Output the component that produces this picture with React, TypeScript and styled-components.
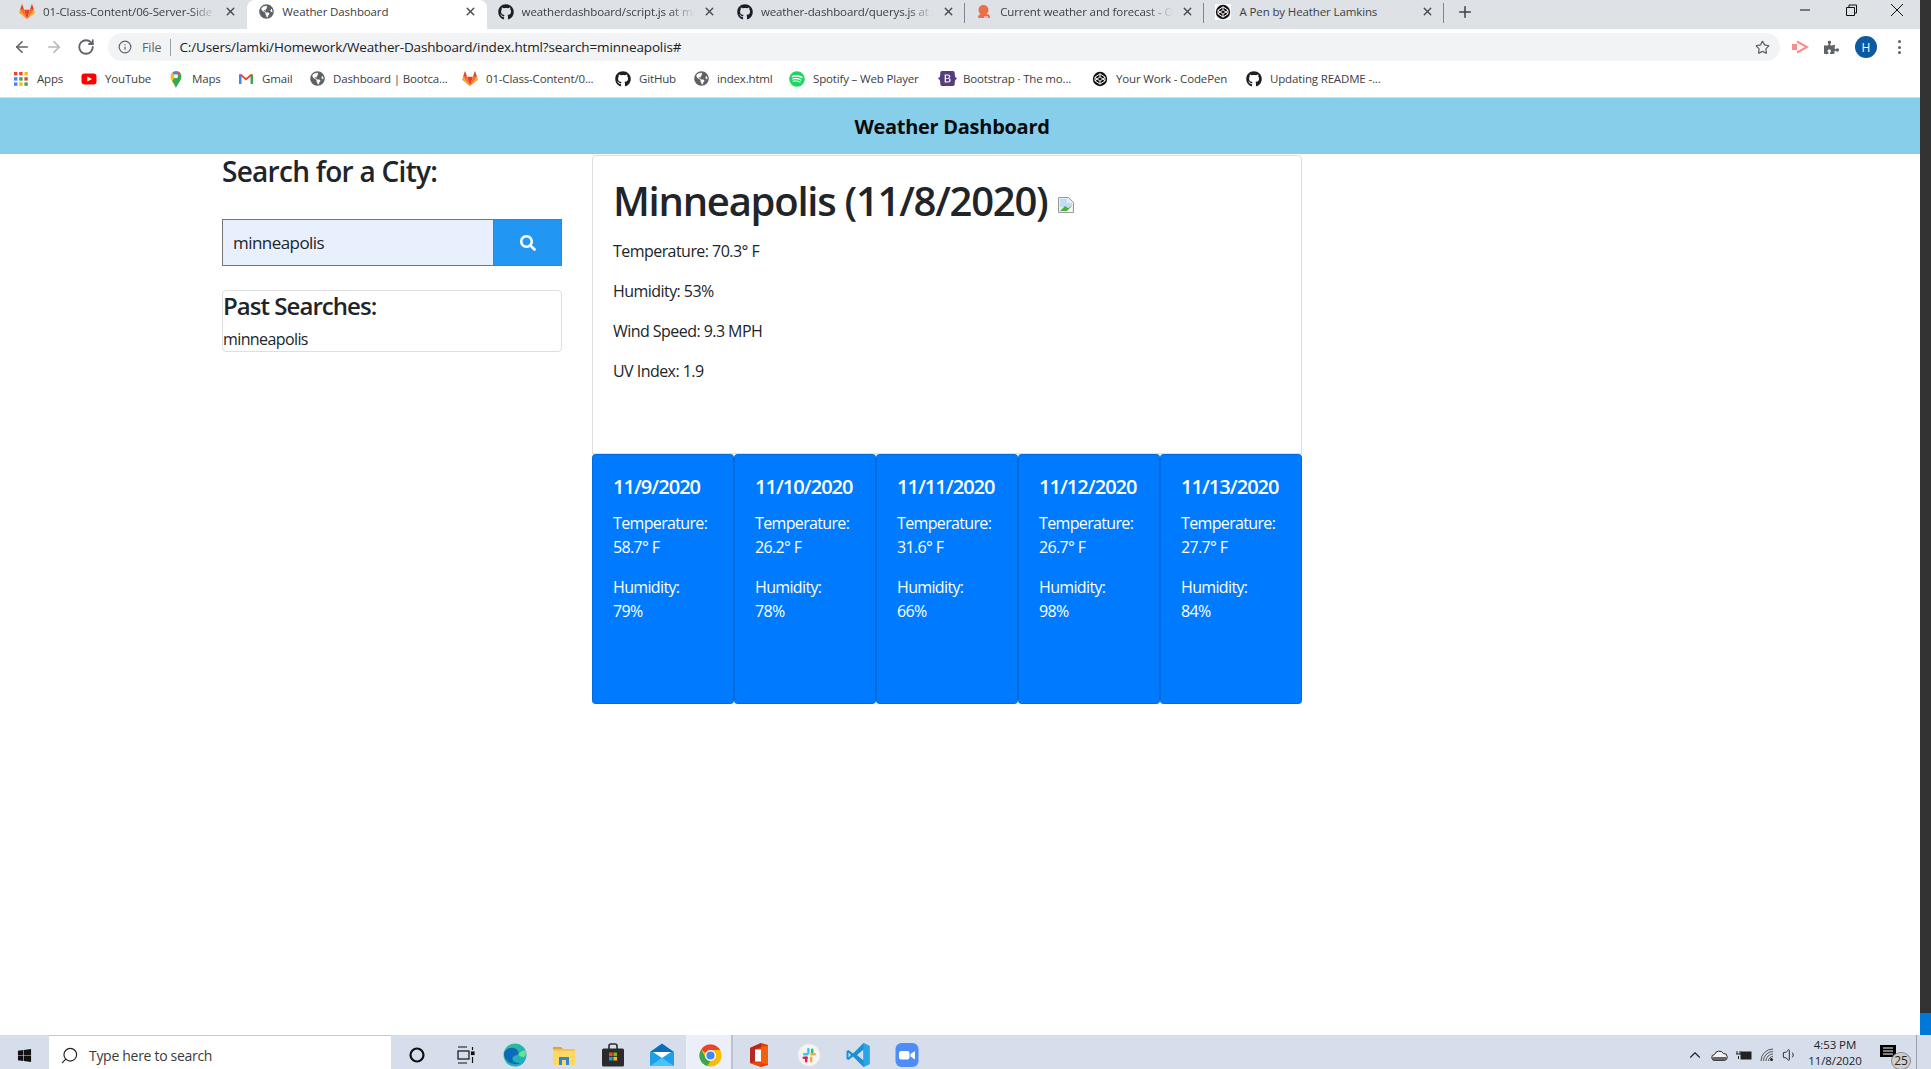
import React from "react";
import styled, { createGlobalStyle } from "styled-components";
import { FaGithub, FaGlobeAmericas, FaSpotify, FaSearch, FaWindows, FaPuzzlePiece, FaBootstrap } from "react-icons/fa";
import { ArrowLeft, ArrowRight, RotateCw, Info, Star, Plus, X, Search, ChevronUp, Volume1 } from "lucide-react";

const Global = createGlobalStyle`
  html, body { margin: 0; padding: 0; background: #fff; overflow: hidden; }
  * { box-sizing: border-box; }
  body { font-family: "Open Sans", "Noto Sans", sans-serif; color: #212529; }
`;

const Screen = styled.div`
  width: 1931px; height: 1069px; display: flex; flex-direction: column; overflow: hidden;
`;
const Upper = styled.div`
  flex: 1; display: flex; min-height: 0;
`;
const Browser = styled.div`
  width: 1920px; display: flex; flex-direction: column; background: #fff;
`;
const SideStrip = styled.div`
  width: 11px; display: flex; flex-direction: column; background: #333;
`;
const SideDark = styled.div`flex: 1;`;
const SideBlue = styled.div`height: 22px; background: #0078d7;`;

const TabStrip = styled.div`
  height: 29px; background: #dee1e6; display: flex; align-items: stretch; padding-left: 8px; flex: none;
`;
const Tab = styled.div<{ $active?: boolean; $sep?: boolean }>`
  width: 239.3px; flex: none; display: flex; align-items: center; padding: 0 8px 6px 11px; gap: 8px;
  background: ${(p) => (p.$active ? "#fff" : "transparent")};
  border-radius: ${(p) => (p.$active ? "8px 8px 0 0" : "0")};
  position: relative;
  &::after {
    content: ""; display: ${(p) => (p.$sep ? "block" : "none")};
    position: absolute; right: 0; top: 3px; bottom: 6px; width: 1px; background: #80868b;
  }
`;
const TabLabel = styled.span<{ $fade?: boolean }>`
  flex: 1; min-width: 0; white-space: nowrap; font-size: 11.5px; letter-spacing: -0.12px; color: #3c4043;
  -webkit-mask-image: ${(p) => (p.$fade ? "linear-gradient(to right, #000 85%, transparent 100%)" : "none")};
`;
const TabClose = styled(X)`
  width: 13px; height: 13px; color: #45494d; flex: none; margin-right: 2px;
`;
const NewTab = styled(Plus)`
  width: 18px; height: 18px; color: #3c4043; align-self: center; margin: 0 0 5px 12px; flex: none;
`;
const WindowControls = styled.div`
  margin-left: auto; display: flex; align-items: center; padding: 0 15px 10px 0; gap: 30px;
`;
const WinGlyph = styled.svg`
  width: 16px; height: 16px; display: block; fill: none; stroke: #111; stroke-width: 1;
`;

const Toolbar = styled.div`
  height: 32px; flex: none; display: flex; align-items: flex-end; background: #fff; padding-left: 13px;
`;
const NavButton = styled.div<{ $dim?: boolean }>`
  width: 18px; height: 28px; margin-right: 14px; display: flex; align-items: center; justify-content: center;
  color: ${(p) => (p.$dim ? "#b4b7bb" : "#5f6368")};
  svg { width: 18px; height: 18px; }
`;
const AddressPill = styled.div`
  width: 1672px; margin-left: -1px; height: 28px; border-radius: 14px; background: #f1f3f4; display: flex; align-items: center; padding: 0 11px 0 10px;
  font-size: 13.5px; color: #202124;
`;
const InfoIcon = styled(Info)`width: 14px; height: 14px; color: #5f6368; flex: none;`;
const FileLabel = styled.span`margin-left: 10px; color: #5f6368; font-size: 12.5px; letter-spacing: -0.1px;`;
const AddressDivider = styled.span`width: 1px; height: 17px; background: #9aa0a6; margin: 0 8px 0 9px;`;
const Url = styled.span`flex: 1; letter-spacing: -0.14px; white-space: nowrap;`;
const StarIcon = styled(Star)`width: 15px; height: 15px; color: #5f6368; flex: none; margin-right: -1px;`;
const Extensions = styled.div`
  width: 140px; display: flex; align-items: center; height: 28px; padding-left: 12px;
`;
const Avatar = styled.div`
  width: 22px; height: 22px; border-radius: 50%; background: #0b5aa2; color: #fff; display: flex; align-items: center; justify-content: center;
  font-size: 12px; margin-left: 16px;
`;
const Dots = styled.div`
  margin-left: 21px; display: flex; flex-direction: column; gap: 2.4px;
  span { width: 3px; height: 3px; background: #5f6368; border-radius: 50%; display: block; }
`;
const PuzzleIcon = styled(FaPuzzlePiece)`width: 15px; height: 15px; color: #5f6368; margin-left: 15px;`;

const BookmarkBar = styled.div`
  height: 37px; flex: none; display: flex; align-items: center; padding: 0 0 1px 13px; border-bottom: 1px solid #dcdcdc; background: #fff;
`;
const Bookmark = styled.div<{ $w: number }>`
  display: flex; align-items: center; gap: 8px; margin-right: 17px;
  span { width: ${(p) => p.$w}px; white-space: nowrap; font-size: 11.5px; letter-spacing: -0.16px; color: #3c4043; }
`;
const FavBox = styled.div`
  width: 16px; height: 16px; flex: none; display: flex; align-items: center; justify-content: center;
  svg { display: block; flex: none; }
`;

const Banner = styled.header`
  height: 56px; flex: none; background: #87ceeb; display: flex; align-items: center; justify-content: center; padding-right: 16px;
  font-size: 20px; font-weight: 700; color: #0b0b0b; letter-spacing: -0.28px;
`;

const Content = styled.main`
  flex: 1; display: flex; gap: 30px; padding: 0 0 0 222px; align-items: flex-start; min-height: 0;
`;
const LeftColumn = styled.section`width: 340px; flex: none;`;
const SearchTitle = styled.h3`
  margin: 0 0 31px; font-size: 28px; line-height: 34px; font-weight: 600; letter-spacing: -0.72px; color: #212529;
`;
const SearchForm = styled.div`display: flex; height: 47px;`;
const SearchField = styled.div`
  width: 272px; background: #e8f0fe; border: 1px solid #767676; padding-left: 10px; display: flex; align-items: center;
  font-size: 17px; letter-spacing: -0.55px; color: #212529;
`;
const SearchButton = styled.div`
  flex: 1; background: #2196f3; border: 1px solid #767676; border-left: none; display: flex; align-items: center; justify-content: center; color: #fff;
  svg { width: 16px; height: 16px; }
`;
const PastBox = styled.div`
  margin-top: 24px; height: 62px; border: 1px solid rgba(0,0,0,.125); border-radius: 4px;
`;
const PastTitle = styled.h4`
  margin: 0 0 7px; font-size: 24px; line-height: 29px; font-weight: 600; letter-spacing: -0.95px;
`;
const PastItem = styled.div`font-size: 16px; line-height: 24px; letter-spacing: -0.6px;`;

const RightColumn = styled.section`width: 710px; flex: none; padding-top: 1px;`;
const WeatherCard = styled.div`
  height: 299px; border: 1px solid rgba(0,0,0,.125); border-top-left-radius: 4px; border-top-right-radius: 4px; padding: 21px 20px 0;
`;
const CityTitle = styled.h1`
  margin: 0 0 14px; font-size: 40px; line-height: 48px; font-weight: 600; letter-spacing: -1.25px; white-space: nowrap;
`;
const BrokenImage = styled.svg`
  width: 16px; height: 16px; margin-left: 11px; vertical-align: 3px;
`;
const Reading = styled.p`
  margin: 0 0 16px; font-size: 16px; line-height: 24px; letter-spacing: -0.55px;
`;
const ForecastRow = styled.div`display: flex;`;
const ForecastCard = styled.article`
  width: 142px; height: 250px; flex: none; background: #007bff; color: #fff; border: 1px solid rgba(0,0,0,.125); border-radius: 4px; padding: 20px;
`;
const ForecastDate = styled.h5`
  margin: 0 0 12px; font-size: 20px; line-height: 24px; font-weight: 600; letter-spacing: -0.95px; white-space: nowrap;
`;
const ForecastText = styled.p`
  margin: 0 0 16px; font-size: 16px; line-height: 24px; letter-spacing: -0.65px;
`;

const Taskbar = styled.footer`
  height: 34px; flex: none; background: #d6deec; overflow: hidden; display: flex; align-items: flex-start;
`;
const TaskSlot = styled.div<{ $w?: number; $active?: boolean }>`
  width: ${(p) => p.$w ?? 49}px; height: 40px; flex: none; display: flex; align-items: center; justify-content: center;
  background: ${(p) => (p.$active ? "#eceff7" : "transparent")};
  padding-left: ${(p) => (p.$active ? "4px" : "0")};
`;
const TaskSearch = styled.div`
  width: 342px; height: 40px; margin-right: 1px; background: #fff; border-top: 1px solid #c8c8c8; display: flex; align-items: center; padding-left: 11px; gap: 10px; flex: none;
  font-size: 14px; color: #3a3a3a; letter-spacing: -0.3px;
`;
const TaskSearchIcon = styled(Search)`width: 19px; height: 19px; transform: scaleX(-1); color: #222;`;
const TaskDivider = styled.div`width: 2px; height: 34px; background: #bcc3cf; flex: none;`;
const Tray = styled.div`
  margin-left: auto; display: flex; align-items: flex-start; height: 40px; padding-right: 0;
`;
const TrayIcon = styled.div<{ $w: number }>`
  width: ${(p) => p.$w}px; height: 40px; display: flex; align-items: center; justify-content: center; color: #222; flex: none;
`;
const Clock = styled.div`
  width: 64px; height: 34px; padding-top: 2px; text-align: center; font-size: 11.5px; line-height: 16px; color: #222; letter-spacing: -0.1px; flex: none; margin-left: 2px;
`;
const NoticeWrap = styled.div`
  width: 40px; height: 40px; position: relative; flex: none; margin-left: 10px; border-right: 1px solid #9aa2b0; margin-right: 14px;
`;
const NoticeBadge = styled.div`
  position: absolute; left: 14px; top: 17px; width: 20px; height: 18px; border-radius: 50%; background: #cfcfcf; border: 1px solid #888;
  font-size: 12px; line-height: 16px; text-align: center; color: #222;
`;

const GitLab = () => (
  <svg width="16" height="16" viewBox="0 0 24 24">
    <path d="M12 23 16.4 8.5H7.6Z" fill="#e24329" />
    <path d="M12 23 7.6 8.5H1.5Z" fill="#fc6d26" />
    <path d="M12 23 16.4 8.5H22.5Z" fill="#fc6d26" />
    <path d="M1.5 8.5.2 12.6c-.1.4 0 .8.3 1L12 23Z" fill="#fca326" />
    <path d="M22.5 8.5 23.8 12.6c.1.4 0 .8-.3 1L12 23Z" fill="#fca326" />
    <path d="M1.5 8.5H7.6L5 .6c-.1-.4-.7-.4-.8 0Z" fill="#e24329" />
    <path d="M22.5 8.5H16.4L19 .6c.1-.4.7-.4.8 0Z" fill="#e24329" />
  </svg>
);
const Globe = () => <FaGlobeAmericas size={15} color="#5f6368" />;
const GitHub = () => <FaGithub size={16} color="#1b1f23" />;
const OpenWeather = () => (
  <svg width="16" height="16" viewBox="0 0 16 16">
    <circle cx="7.5" cy="6" r="5" fill="#eb6e4b" />
    <path d="M2 14c0-3 2-4 3-4h6c2 0 3 1.500 3 4Z" fill="#eb6e4b" />
    <path d="M8 12h4v2H8Z" fill="#f6b9a6" />
  </svg>
);
const CodePen = () => (
  <svg width="16" height="16" viewBox="0 0 16 16">
    <rect width="16" height="16" fill="#fff" />
    <circle cx="8" cy="8" r="7.2" fill="#111" />
    <path d="M8 2.800 13 6.200V9.800L8 13.200 3 9.800V6.200ZM8 2.800V5.800M8 10.200V13.200M3 6.200 8 10.200 13 6.200M3 9.800 8 5.800 13 9.800" fill="none" stroke="#fff" strokeWidth="1" />
  </svg>
);
const AppsGrid = () => (
  <svg width="14" height="14" viewBox="0 0 14 14">
    {["#ea4335", "#ea4335", "#fbbc04", "#4285f4", "#34a853", "#ea4335", "#4285f4", "#fbbc04", "#34a853"].map((c, i) => (
      <rect key={i} x={(i % 3) * 5.2} y={Math.floor(i / 3) * 5.2} width="3.4" height="3.4" fill={c} />
    ))}
  </svg>
);
const YouTube = () => (
  <svg width="16" height="16" viewBox="0 0 16 16">
    <rect x="0.5" y="2.5" width="15" height="11" rx="3" fill="#f00" />
    <path d="M6.3 5.500 11 8 6.300 10.500Z" fill="#fff" />
  </svg>
);
const MapsPin = () => (
  <svg width="16" height="18" viewBox="0 0 16 20">
    <path d="M8 20C6.500 16 2 12 2 7a6 6 0 0 1 1.800-4.200L8 7Z" fill="#fbbc04" />
    <path d="M8 20c1.500-4 6-8 6-13a6 6 0 0 0-.7-2.800L8 7l-4.200 5.200C5.200 14.500 7 17 8 20Z" fill="#34a853" />
    <path d="M3.800 2.800A6 6 0 0 1 8 1a6 6 0 0 1 3 .8L8 7Z" fill="#4285f4" />
    <path d="M11 1.800a6 6 0 0 1 2.300 2.400L8 7Z" fill="#ea4335" />
    <circle cx="8" cy="7" r="2.200" fill="#fff" />
  </svg>
);
const Gmail = () => (
  <svg width="16" height="16" viewBox="0 0 16 16">
    <path d="M1 3.500h2.500V13H1Z" fill="#4285f4" />
    <path d="M12.500 3.500H15V13h-2.500Z" fill="#34a853" />
    <path d="M1 3.500 3.500 3.300 8 7l4.500-3.700L15 3.500 8 9.500Z" fill="#ea4335" />
  </svg>
);
const Chrome = ({ s = 23 }: { s?: number }) => (
  <svg width={s} height={s} viewBox="0 0 24 24">
    <circle cx="12" cy="12" r="11.500" fill="#fbbc04" />
    <path d="M12 .5A11.500 11.500 0 0 1 22 6.300H12A5.700 5.700 0 0 0 6.900 9.400L2.300 5.700A11.500 11.500 0 0 1 12 .5Z" fill="#ea4335" />
    <path d="M2.300 5.700 6.900 14.300A5.700 5.700 0 0 0 12 17.700L8.700 23A11.500 11.500 0 0 1 2.300 5.700Z" fill="#34a853" />
    <circle cx="12" cy="12" r="5.700" fill="#fff" />
    <circle cx="12" cy="12" r="4.300" fill="#4285f4" />
  </svg>
);
const Edge = () => (
  <svg width="24" height="24" viewBox="0 0 24 24">
    <defs>
      <linearGradient id="edgeA" x1="0" y1="0" x2="1" y2="1"><stop offset="0" stopColor="#33c481" /><stop offset="1" stopColor="#1ba5d8" /></linearGradient>
    </defs>
    <circle cx="12" cy="12" r="11.500" fill="url(#edgeA)" />
    <path d="M1 12C1 6 7 4 11 5c3 .8 5 3 4.500 6.500-3 1-6 1.500-6 4 0 3 4 5 8 4.500A11.500 11.500 0 0 1 1 12Z" fill="#0c6bb8" />
    <path d="M15.500 11.500c.5 1.500 3 3 5.500 2.500 2-1.500 2.500-5 1.500-6.500-1-.5-6 .5-7 4Z" fill="#6be28f" />
  </svg>
);
const Folder = () => (
  <svg width="24" height="22" viewBox="0 0 24 22">
    <path d="M1 3h8l2 2h-10Z" fill="#e4a22d" />
    <path d="M1 5h22v16H1Z" fill="#ffd767" />
    <path d="M1 5h22v2H1Z" fill="#f5c34c" />
    <path d="M7 21v-8h10v8h-3v-5h-4v5Z" fill="#2d86d4" />
  </svg>
);
const StoreBag = () => (
  <svg width="24" height="24" viewBox="0 0 24 24">
    <path d="M8 6V3a2 2 0 0 1 2-2h4a2 2 0 0 1 2 2v3" fill="none" stroke="#2b2b2b" strokeWidth="1.600" />
    <rect x="1" y="5.500" width="22" height="18" rx="1.500" fill="#2b2b2b" />
    <rect x="8" y="9.500" width="3.600" height="3.600" fill="#f25022" />
    <rect x="12.400" y="9.500" width="3.600" height="3.600" fill="#7fba00" />
    <rect x="8" y="13.900" width="3.600" height="3.600" fill="#00a4ef" />
    <rect x="12.400" y="13.900" width="3.600" height="3.600" fill="#ffb900" />
  </svg>
);
const MailIcon = () => (
  <svg width="24" height="24" viewBox="0 0 24 24">
    <rect x="0" y="9" width="24" height="14" fill="#1f9fe8" />
    <path d="M0 9 12 .5 24 9Z" fill="#0a6cbc" />
    <path d="M3 9h18l-9 6Z" fill="#fff" />
    <path d="M0 23 12 15l12 8Z" fill="#45c5f8" />
  </svg>
);
const Office = () => (
  <svg width="20" height="24" viewBox="0 0 20 24">
    <path d="M12 0 19 2V22L12 24 1 20V5Z" fill="#eb3c00" />
    <path d="M12 0 1 5v15l5-2V6.500L12 4Z" fill="#b7281e" />
    <path d="M12 24 1 20h11Z" fill="#e64a19" />
    <rect x="6" y="6.500" width="6" height="12" fill="#fff" />
    <path d="M12 4v16l7 1V3Z" fill="#f0620f" />
  </svg>
);
const Slack = () => (
  <svg width="24" height="24" viewBox="0 0 24 24">
    <circle cx="12" cy="12" r="11.500" fill="#f4f4f4" stroke="#ddd" />
    <rect x="10.200" y="5" width="2.400" height="6" rx="1.200" fill="#36c5f0" />
    <rect x="6" y="10" width="5.500" height="2.400" rx="1.200" fill="#36c5f0" />
    <rect x="14" y="5.500" width="2.400" height="6" rx="1.200" fill="#2eb67d" />
    <rect x="13" y="10" width="6" height="2.400" rx="1.200" fill="#ecb22e" />
    <rect x="13" y="13.500" width="2.400" height="6" rx="1.200" fill="#ecb22e" />
    <rect x="8" y="13.500" width="2.400" height="6" rx="1.200" fill="#e01e5a" />
    <rect x="5.500" y="13.500" width="5.500" height="2.400" rx="1.200" fill="#e01e5a" />
  </svg>
);
const VSCode = () => (
  <svg width="24" height="24" viewBox="0 0 24 24">
    <path d="M17.500 0 23.500 3V21L17.500 24 7 13.500 2.500 17 .5 16V8L2.500 7 7 10.500Z" fill="#1b8fd6" />
    <path d="M17.500 6.500 11 12l6.500 5.500ZM2.500 9.500V14.500L5 12Z" fill="#d6deec" />
    <path d="M17.500 0 23.500 3V21L17.500 24Z" fill="#2ba5e8" />
  </svg>
);
const ZoomIcon = () => (
  <svg width="24" height="24" viewBox="0 0 24 24">
    <rect width="23" height="24" x="0.500" rx="6" fill="#4d8df7" />
    <rect x="4" y="8" width="10.500" height="8.500" rx="2" fill="#fff" />
    <path d="M15.500 11 20 8v8.500l-4.500-3Z" fill="#fff" />
  </svg>
);
const TaskView = () => (
  <svg width="18" height="18" viewBox="0 0 18 18" fill="none" stroke="#111" strokeWidth="1.200">
    <path d="M1 1h9M1 17h9" />
    <rect x="1" y="5" width="11" height="8" />
    <path d="M15.500 1v3" />
    <rect x="14.500" y="6" width="2.500" height="2.500" fill="#111" />
    <path d="M15.500 11v6" />
  </svg>
);
const Cortana = () => (
  <svg width="16" height="16" viewBox="0 0 16 16"><circle cx="8" cy="8" r="6.500" fill="none" stroke="#111" strokeWidth="2.200" /></svg>
);
const Cloud = () => (
  <svg width="17" height="11" viewBox="0 0 17 11">
    <path d="M4 10.500a3 3 0 0 1-.5-6A5 5 0 0 1 12.500 3.500a3.500 3.500 0 0 1 .5 7Z" fill="#f2f2f2" stroke="#222" />
    <path d="M1.500 7h14v1a2.500 2.500 0 0 1-2.500 2.500H4A2.500 2.500 0 0 1 1.500 7Z" fill="#666" />
  </svg>
);
const BatteryPlug = () => (
  <svg width="17" height="12" viewBox="0 0 17 12" fill="none" stroke="#222">
    <path d="M1 5h5M2 2v3M5 2v3M3.500 7V10" />
    <rect x="6" y="3" width="10" height="7" fill="#222" />
  </svg>
);
const Wifi = () => (
  <svg width="14" height="14" viewBox="0 0 14 14" fill="none" stroke="#555" strokeWidth="1">
    <path d="M1 13A12 12 0 0 1 13 1M3.500 13A9.500 9.500 0 0 1 13 3.500M6 13a7 7 0 0 1 7-7M8.500 13A4.500 4.500 0 0 1 13 8.500" />
    <circle cx="11.500" cy="11.500" r="1.500" fill="#222" stroke="none" />
  </svg>
);
const Notice = () => (
  <svg width="16" height="14" viewBox="0 0 16 14" style={{ position: "absolute", left: 3, top: 10 }}>
    <rect width="16" height="12" fill="#000" />
    <path d="M3 3h10M3 6h10M3 9h10" stroke="#fff" />
  </svg>
);
const PlayMark = () => (
  <svg width="17" height="14" viewBox="0 0 17 14">
    <rect x="0" y="4" width="5" height="6" fill="#ff8a8e" />
    <path d="M5 1.500 15 7 5 12.500" fill="none" stroke="#ff8a8e" strokeWidth="2" />
  </svg>
);

const tabs = [
  { icon: <GitLab />, label: "01-Class-Content/06-Server-Side", fade: true },
  { icon: <Globe />, label: "Weather Dashboard", active: true },
  { icon: <GitHub />, label: "weatherdashboard/script.js at ma", fade: true },
  { icon: <GitHub />, label: "weather-dashboard/querys.js at r", sep: true, fade: true },
  { icon: <OpenWeather />, label: "Current weather and forecast - O", sep: true, fade: true },
  { icon: <CodePen />, label: "A Pen by Heather Lamkins", sep: true },
];
const bookmarks = [
  { icon: <AppsGrid />, label: "Apps", w: 27 },
  { icon: <YouTube />, label: "YouTube", w: 46 },
  { icon: <MapsPin />, label: "Maps", w: 29 },
  { icon: <Gmail />, label: "Gmail", w: 30 },
  { icon: <Globe />, label: "Dashboard | Bootca...", w: 112 },
  { icon: <GitLab />, label: "01-Class-Content/0...", w: 112 },
  { icon: <GitHub />, label: "GitHub", w: 37 },
  { icon: <Globe />, label: "index.html", w: 55 },
  { icon: <FaSpotify size={16} color="#1ed760" />, label: "Spotify – Web Player", w: 109 },
  { icon: <FaBootstrap size={19} color="#563d7c" />, label: "Bootstrap · The mo...", w: 112 },
  { icon: <CodePen />, label: "Your Work - CodePen", w: 113 },
  { icon: <GitHub />, label: "Updating README -...", w: 114 },
];
const readings = ["Temperature: 70.3° F", "Humidity: 53%", "Wind Speed: 9.3 MPH", "UV Index: 1.9"];
const forecast = [
  { date: "11/9/2020", temp: "58.7° F", hum: "79%" },
  { date: "11/10/2020", temp: "26.2° F", hum: "78%" },
  { date: "11/11/2020", temp: "31.6° F", hum: "66%" },
  { date: "11/12/2020", temp: "26.7° F", hum: "98%" },
  { date: "11/13/2020", temp: "27.7° F", hum: "84%" },
];

export default function App() {
  return (
    <Screen>
      <Global />
      <Upper>
        <Browser>
          <TabStrip>
            {tabs.map((t) => (
              <Tab key={t.label} $active={t.active} $sep={t.sep}>
                <FavBox>{t.icon}</FavBox>
                <TabLabel $fade={t.fade}>{t.label}</TabLabel>
                <TabClose strokeWidth={2.6} />
              </Tab>
            ))}
            <NewTab strokeWidth={2} />
            <WindowControls>
              <WinGlyph viewBox="0 0 16 16"><path d="M3 8h10" /></WinGlyph>
              <WinGlyph viewBox="0 0 16 16"><path d="M3.500 5.500h8v8h-8ZM6 5.500V3h7.500v8H11.500" /></WinGlyph>
              <WinGlyph viewBox="0 0 16 16"><path d="M2 2l12 12M14 2 2 14" /></WinGlyph>
            </WindowControls>
          </TabStrip>
          <Toolbar>
            <NavButton><ArrowLeft strokeWidth={2.2} /></NavButton>
            <NavButton $dim><ArrowRight strokeWidth={2.2} /></NavButton>
            <NavButton><RotateCw strokeWidth={2.4} /></NavButton>
            <AddressPill>
              <InfoIcon strokeWidth={2} />
              <FileLabel>File</FileLabel>
              <AddressDivider />
              <Url>C:/Users/lamki/Homework/Weather-Dashboard/index.html?search=minneapolis#</Url>
              <StarIcon strokeWidth={2} />
            </AddressPill>
            <Extensions>
              <PlayMark />
              <PuzzleIcon />
              <Avatar>H</Avatar>
              <Dots><span /><span /><span /></Dots>
            </Extensions>
          </Toolbar>
          <BookmarkBar>
            {bookmarks.map((b) => (
              <Bookmark key={b.label} $w={b.w}>
                <FavBox>{b.icon}</FavBox>
                <span>{b.label}</span>
              </Bookmark>
            ))}
          </BookmarkBar>
          <Banner>Weather Dashboard</Banner>
          <Content>
            <LeftColumn>
              <SearchTitle>Search for a City:</SearchTitle>
              <SearchForm>
                <SearchField>minneapolis</SearchField>
                <SearchButton><FaSearch /></SearchButton>
              </SearchForm>
              <PastBox>
                <PastTitle>Past Searches:</PastTitle>
                <PastItem>minneapolis</PastItem>
              </PastBox>
            </LeftColumn>
            <RightColumn>
              <WeatherCard>
                <CityTitle>
                  Minneapolis (11/8/2020)
                  <BrokenImage viewBox="0 0 16 16">
                    <path d="M.5.5h10l5 5v10H.5Z" fill="#e8eef5" stroke="#9a9a9a" />
                    <path d="M2 2h7v4h5v4H2Z" fill="#c4dcf2" />
                    <path d="M2 14l5-5 3 2 4-2v5Z" fill="#4caf3a" />
                    <path d="M8 15l6-6v6Z" fill="#fff" />
                  </BrokenImage>
                </CityTitle>
                {readings.map((r) => <Reading key={r}>{r}</Reading>)}
              </WeatherCard>
              <ForecastRow>
                {forecast.map((f) => (
                  <ForecastCard key={f.date}>
                    <ForecastDate>{f.date}</ForecastDate>
                    <ForecastText>Temperature:<br />{f.temp}</ForecastText>
                    <ForecastText>Humidity:<br />{f.hum}</ForecastText>
                  </ForecastCard>
                ))}
              </ForecastRow>
            </RightColumn>
          </Content>
        </Browser>
        <SideStrip>
          <SideDark />
          <SideBlue />
        </SideStrip>
      </Upper>
      <Taskbar>
        <TaskSlot><FaWindows size={15} color="#111" /></TaskSlot>
        <TaskSearch>
          <TaskSearchIcon strokeWidth={1.5} />
          Type here to search
        </TaskSearch>
        <TaskSlot><Cortana /></TaskSlot>
        <TaskSlot><TaskView /></TaskSlot>
        <TaskSlot><Edge /></TaskSlot>
        <TaskSlot><Folder /></TaskSlot>
        <TaskSlot><StoreBag /></TaskSlot>
        <TaskSlot><MailIcon /></TaskSlot>
        <TaskSlot $w={45} $active><Chrome /></TaskSlot>
        <TaskDivider />
        <TaskSlot $w={51}><Office /></TaskSlot>
        <TaskSlot><Slack /></TaskSlot>
        <TaskSlot><VSCode /></TaskSlot>
        <TaskSlot><ZoomIcon /></TaskSlot>
        <Tray>
          <TrayIcon $w={24}><ChevronUp size={18} strokeWidth={1.5} /></TrayIcon>
          <TrayIcon $w={24}><Cloud /></TrayIcon>
          <TrayIcon $w={24}><BatteryPlug /></TrayIcon>
          <TrayIcon $w={24}><Wifi /></TrayIcon>
          <TrayIcon $w={22}><Volume1 size={16} strokeWidth={1.4} /></TrayIcon>
          <Clock>4:53 PM<br />11/8/2020</Clock>
          <NoticeWrap>
            <Notice />
            <NoticeBadge>25</NoticeBadge>
          </NoticeWrap>
        </Tray>
      </Taskbar>
    </Screen>
  );
}
